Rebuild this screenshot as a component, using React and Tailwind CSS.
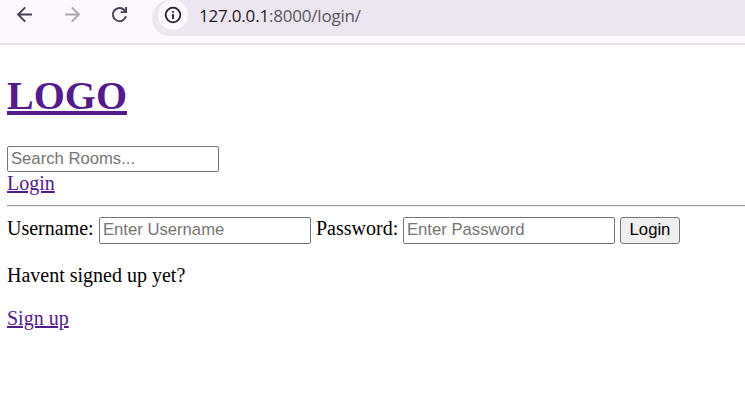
function Toolbar() {
  return (
    <header className="flex h-[45px] items-start border-b-2 border-[#e8e0ee] bg-[#fdf7ff]">
      <svg className="h-9 w-[152px] shrink-0" viewBox="0 0 152 36" fill="none" strokeWidth="1.9">
        <path d="M32 14.5H18.5M25.2 7.4L18.1 14.5L25.2 21.6" stroke="#493e55" />
        <path d="M65 14.5H78.5M71.8 7.4L78.9 14.5L71.8 21.6" stroke="#aca5af" />
        <path d="M125.9 16.2A6.6 6.6 0 1 1 124.3 10L126 12" stroke="#493e55" />
        <path d="M126.1 7V12.1H120.6" stroke="#493e55" />
      </svg>
      <div className="flex h-9 flex-1 items-start rounded-bl-[21px] rounded-tl-[21px] bg-[#ede6f1] pl-[6px]">
        <svg className="h-[30px] w-[30px] shrink-0" viewBox="0 0 30 30" fill="none">
          <circle cx="15" cy="15" r="15" fill="#fdf7ff" />
          <circle cx="15" cy="15" r="7.3" stroke="#252129" strokeWidth="1.8" />
          <path d="M15 14V19M15 11V12.8" stroke="#252129" strokeWidth="1.8" />
        </svg>
        <span className="ml-[11px] mt-[5px] whitespace-nowrap font-['Open_Sans',sans-serif] text-[17px] leading-[22px] tracking-[-0.2px] text-[#5a5560]">
          <span className="text-[#1f1b24]">127.0.0.1</span>:8000/login/
        </span>
      </div>
    </header>
  );
}

const field =
  "block w-[212px] rounded-[2px] border border-[#767676] bg-white px-[3px] font-['Liberation_Sans',Arial,sans-serif] text-[16.67px] leading-5 placeholder:text-[#757575] outline-none";

const link = "underline decoration-2 underline-offset-[1px]";

export default function App() {
  return (
    <div className="min-h-screen overflow-hidden bg-white font-['Liberation_Serif',serif] text-[20px] leading-[22px] text-black">
      <Toolbar />
      <main className="flex flex-col pl-[7px]">
        <h1 className="pb-[27px] pt-7 text-[40px] font-bold leading-[46px] text-[#551a8b]">
          <a className="underline decoration-4 underline-offset-[2px]">LOGO</a>
        </h1>
        <input className={`${field} h-[26px]`} placeholder="Search Rooms..." />
        <div className="text-[#551a8b]">
          <a className={link}>Login</a>
        </div>
        <hr className="mb-[10px] mt-[11px] h-[2px] border-b border-t border-b-[#eeeeee] border-t-[#9a9a9a]" />
        <form className="flex h-[27px]">
          <label className="w-[92px]">Username:</label>
          <input className={`${field} h-[27px] pb-[2px]`} placeholder="Enter Username" />
          <label className="ml-[5px] w-[87px]">Password:</label>
          <input className={`${field} h-[27px] pb-[2px]`} placeholder="Enter Password" />
          <button
            type="button"
            className="ml-[5px] h-[27px] w-[60px] rounded-[3px] border border-[#767676] bg-[#efefef] pb-[2px] font-['Liberation_Sans',Arial,sans-serif] text-[16.67px] leading-5"
          >
            Login
          </button>
        </form>
        <p className="my-5">Havent signed up yet?</p>
        <div className="pt-px text-[#551a8b]">
          <a className={link}>Sign up</a>
        </div>
      </main>
    </div>
  );
}
